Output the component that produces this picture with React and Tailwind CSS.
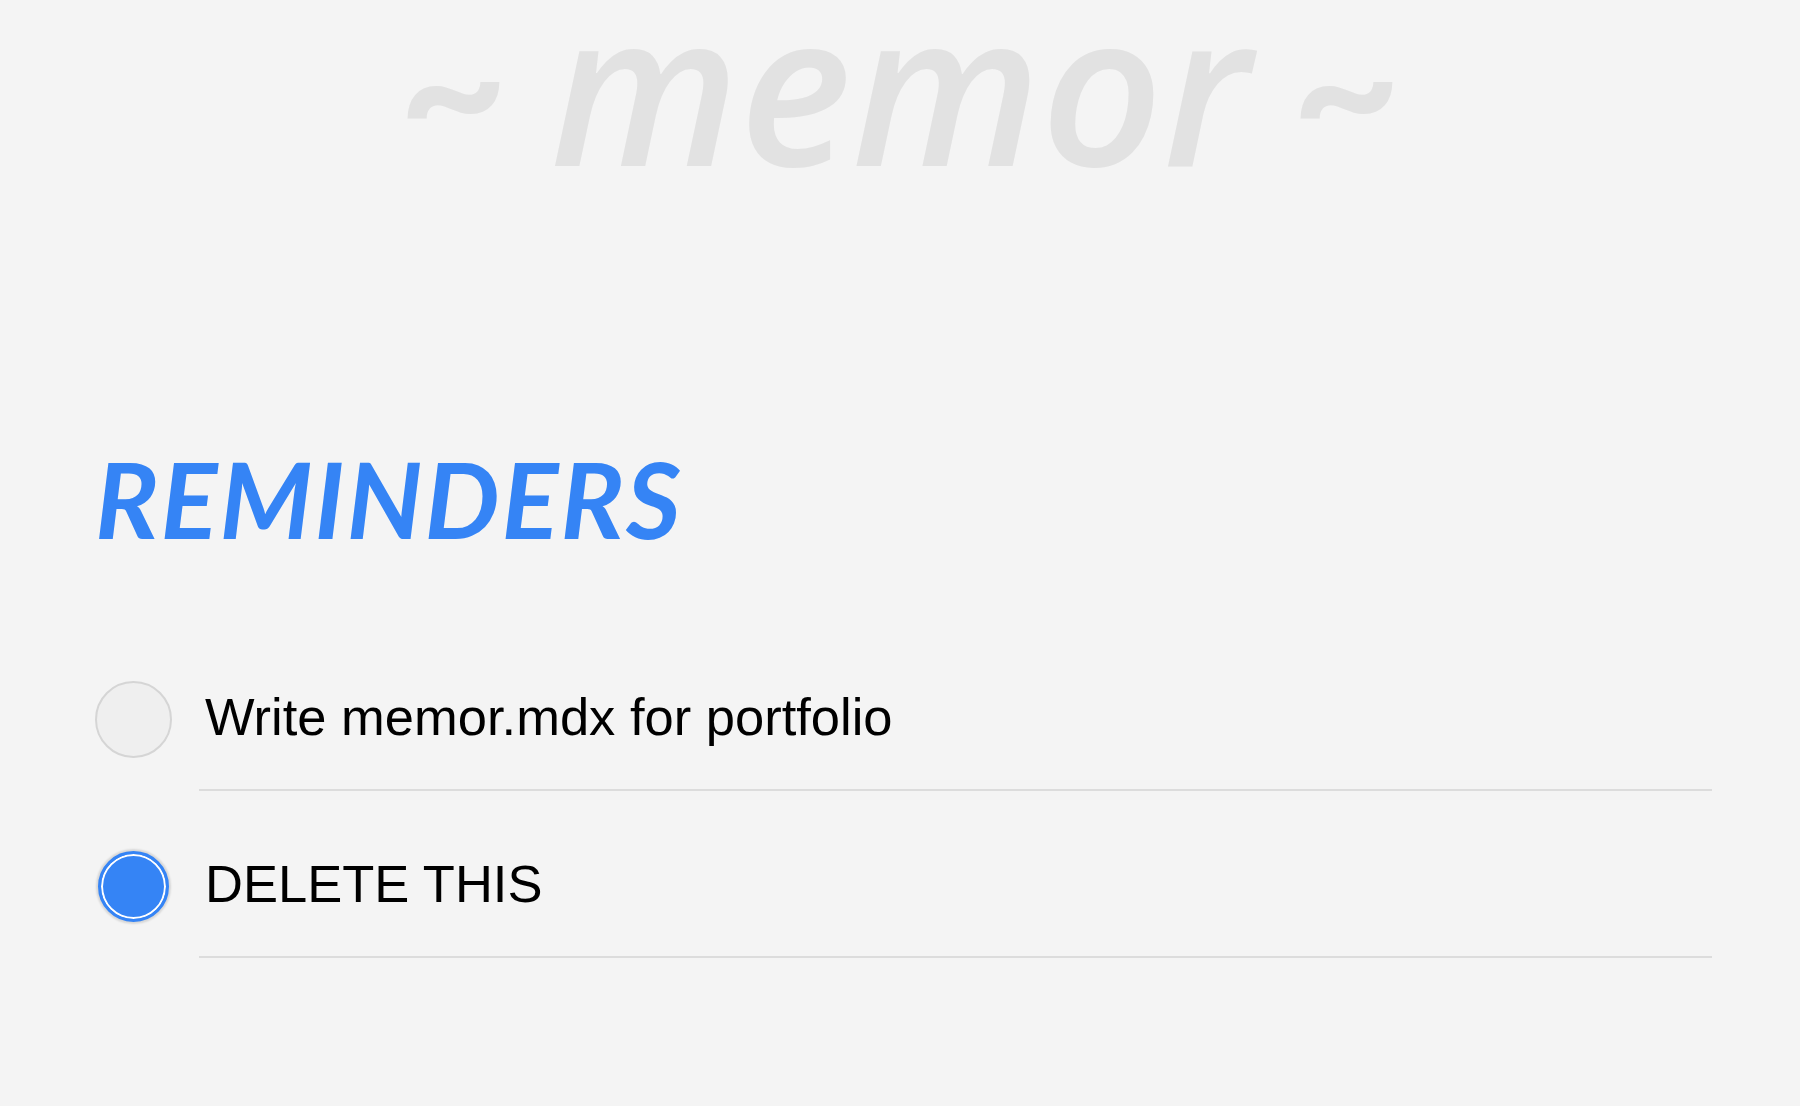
export default function App() {
  const rows = [
    { text: "Write memor.mdx for portfolio", checked: false },
    { text: "DELETE THIS", checked: true },
  ];
  return (
    <div className="min-h-[1106px] w-full bg-[#f4f4f4] overflow-hidden" style={{ fontFamily: "Lato, 'Liberation Sans', sans-serif" }}>
      <div className="flex justify-center">
        <h1 className="text-[213px] leading-[167px] font-semibold italic text-[#e2e2e2] whitespace-nowrap" style={{ fontFamily: "'Open Sans', sans-serif" }}>
          <span className="text-[190px] leading-[0] font-bold align-[10px] mr-[-14px]" style={{ fontFamily: "Lato, sans-serif" }}>~</span>{" "}
          memor{" "}
          <span className="text-[190px] leading-[0] font-bold align-[10px] ml-[-14px]" style={{ fontFamily: "Lato, sans-serif" }}>~</span>
        </h1>
      </div>
      <div className="pl-[95px] pr-[88px]">
        <h2 className="mt-[278px] text-[106px] leading-none font-bold italic text-[#3584f5] tracking-[2px]" style={{ fontFamily: "Lato, sans-serif" }}>
          REMINDERS
        </h2>
        <div className="mt-[130px] flex flex-col gap-[57px]">
          {rows.map((r) => (
            <div key={r.text} className="flex items-start">
              <div className="w-[77px] h-[77px] flex items-center justify-center shrink-0">
                {r.checked ? (
                  <div className="w-[71px] h-[71px] rounded-full bg-[#3584f5] border-[3px] border-[#3584f5] shadow-[inset_0_0_0_2px_white,0_0_2px_2px_rgba(0,0,0,0.12)]" />
                ) : (
                  <div className="w-[77px] h-[77px] rounded-full bg-[#efefef] border-2 border-[#d5d5d5]" />
                )}
              </div>
              <div className="flex-1 ml-[27px] pb-[31px] border-b-2 border-[#dcdcdc]">
                <div className="h-[77px] flex items-center pb-[4px] pl-[6px] text-[52.5px] leading-none text-black" style={{ fontFamily: "'Liberation Sans', Arial, sans-serif" }}>
                  {r.text}
                </div>
              </div>
            </div>
          ))}
        </div>
      </div>
    </div>
  );
}
